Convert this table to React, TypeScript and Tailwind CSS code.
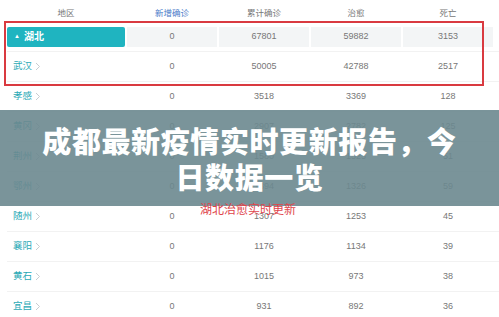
const rows = [
  { name: "武汉", add: 0, total: 50005, cured: 42788, dead: 2517 },
  { name: "孝感", add: 0, total: 3518, cured: 3369, dead: 128 },
  { name: "黄冈", add: 0, total: 2907, cured: 2782, dead: 125 },
  { name: "荆州", add: 0, total: 1580, cured: 1525, dead: 51 },
  { name: "鄂州", add: 0, total: 1394, cured: 1326, dead: 59 },
  { name: "随州", add: 0, total: 1307, cured: 1253, dead: 45 },
  { name: "襄阳", add: 0, total: 1176, cured: 1134, dead: 39 },
  { name: "黄石", add: 0, total: 1015, cured: 973, dead: 38 },
  { name: "宜昌", add: 0, total: 931, cured: 892, dead: 36 },
];

const grid = "grid grid-cols-[118px_repeat(4,90px)] gap-x-[2px]";

function Chevron() {
  return (
    <svg width="6" height="9" viewBox="0 0 6 9" className="ml-[3px]">
      <path d="M1 1l3.5 3.5L1 8" fill="none" stroke="#c8cdd0" strokeWidth="1" />
    </svg>
  );
}

export default function App() {
  return (
    <div className="relative h-[317px] w-[499px] overflow-hidden bg-white font-['Liberation_Sans','Noto_Sans_CJK_SC',sans-serif]">
      <div className="pl-[7px]">
        {/* header */}
        <div className={`${grid} h-[22px] items-end pb-[2px] text-[8.5px] text-[#777]`}>
          <div className="text-center">地区</div>
          <div className="text-center text-[#4a7bc9]">新增确诊</div>
          <div className="text-center">累计确诊</div>
          <div className="text-center">治愈</div>
          <div className="text-center">死亡</div>
        </div>

        {/* province row */}
        <div className={`${grid} h-[30px] items-center border-b border-[#f2f2f2] text-[9px] text-[#777]`}>
          <div className="flex h-[20px] items-center rounded-[2px] bg-[#1fb4c0] pl-[7px] text-[10px] font-bold text-white">
            <span className="mr-[4px] text-[6px]">▲</span>湖北
          </div>
          <div className="flex h-[20px] items-center justify-center bg-[#f3f5f6]">0</div>
          <div className="flex h-[20px] items-center justify-center bg-[#f3f5f6]">67801</div>
          <div className="flex h-[20px] items-center justify-center bg-[#f3f5f6]">59882</div>
          <div className="flex h-[20px] items-center justify-center bg-[#f3f5f6]">3153</div>
        </div>

        {rows.map((r) => (
          <div
            key={r.name}
            className={`${grid} h-[30px] items-center border-b border-[#f2f2f2] text-[9px] text-[#777]`}
          >
            <div className="flex items-center pl-[6px] text-[9.5px] text-[#2aa9b5]">
              {r.name}
              <Chevron />
            </div>
            <div className="text-center">{r.add}</div>
            <div className="text-center">{r.total}</div>
            <div className="text-center">{r.cured}</div>
            <div className="text-center">{r.dead}</div>
          </div>
        ))}
      </div>

      {/* red annotation box */}
      <div className="absolute left-[4px] top-[21px] h-[65px] w-[480px] border-2 border-[#d93a40]" />

      {/* title band */}
      <div className="absolute left-0 top-[110px] flex h-[96px] w-full flex-col items-center justify-center bg-[rgba(108,136,143,0.9)] font-['Noto_Sans_CJK_SC',sans-serif] text-[29px] font-black leading-[36px] tracking-[0.6px] text-white">
        <div>成都最新疫情实时更新报告，今</div>
        <div>日数据一览</div>
      </div>

      {/* red caption */}
      <div className="absolute left-[200px] top-[201px] font-['Noto_Sans_CJK_SC',sans-serif] text-[12px] leading-[16px] text-[#e0454b]">
        湖北治愈实时更新
      </div>
    </div>
  );
}
